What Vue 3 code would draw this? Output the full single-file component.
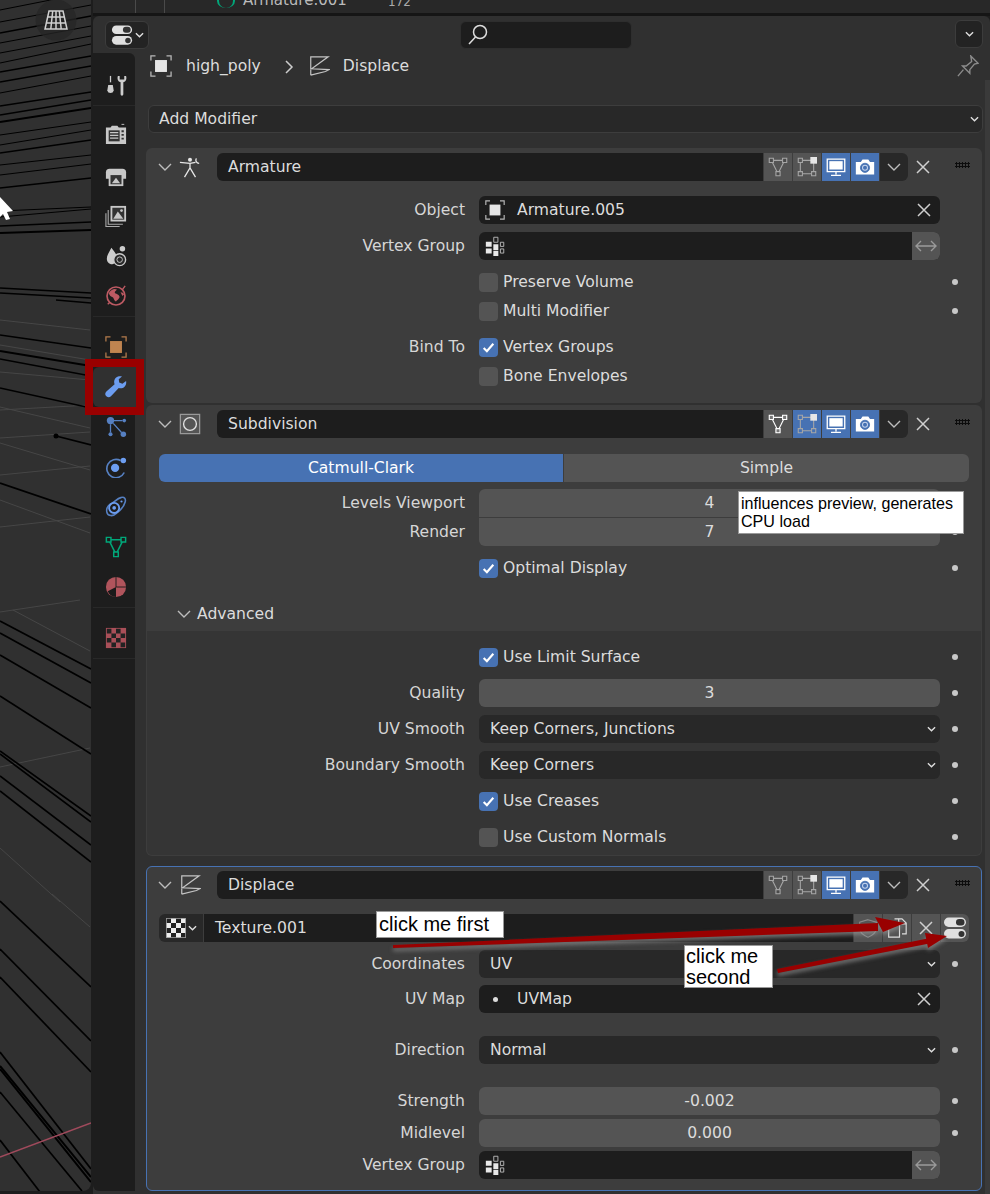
<script setup>
const blackLines = [
  [10,-8,1],[22,5,1],[33,16,1.4],[43,26,1],[53,36,1],[63,44,1.2],[72,56,1.6],[82,66,1.3],[93,76,1],[106,92,1.6],[115,100,1.6],[122,108,1.8],[135,122,1],[145,130,1],[153,140,1.3],[165,155,1],[175,164,1],[188,178,1.4],[211,207,1],[217,209,1],[226,222,1.4],[233,230,2],
  [288,293,1.4],[293,298,1.4],[335,348,1.6],[351,366,2],[359,376,1.6],[388,408,1.6],[483,514,1.8],
  [621,669,1.7],[633,683,1.7],[655,708,1.7],[696,754,1.7],[751,816,1.7],[754,822,1.7],[776,845,1.7],[791,862,1.7],
  [901,987,1.7],[949,1041,1.7],[977,1072,1.7],[1052,1169,1.7],[1066,1177,2],[1069,1182,2]
]
const grayLines = [
  [0,410,90,405],[0,438,90,432],[0,475,90,466],[0,527,90,517],[0,443,90,470],[0,407,90,428],[0,500,90,533],
  [0,612,80,600],[13,610,90,651],[0,767,90,748],[0,848,60,902],[52,894,90,927],[0,345,90,360],[0,320,90,330],[0,372,90,380]
]
const tabGroups = [
  [{ i: 'i-tool' }],
  [{ i: 'i-render' }, { i: 'i-output' }, { i: 'i-view' }, { i: 'i-scene' }, { i: 'i-world' }],
  [{ i: 'i-object' }, { i: 'i-wrench', active: true }, { i: 'i-particles' }, { i: 'i-physics' }, { i: 'i-constraint' }, { i: 'i-data' }, { i: 'i-material' }],
  [{ i: 'i-texture' }]
]
</script>

<template>
  <div class="app">
    <svg class="defs" width="0" height="0">
      <symbol id="i-tool" viewBox="0 0 24 24"><path d="M6 1v7" stroke="#ccc" stroke-width="1.400" fill="none"/><path d="M3.500 11h5l1 6a3.600 3.600 0 0 1-7 0z" fill="#ccc"/><path d="M14 1c-1 3 0 6 3 7v13a1.500 1.500 0 0 0 3 0V8c3-1 4-4 3-7l-2 0v4h-5V1z" fill="#ccc"/></symbol>
      <symbol id="i-render" viewBox="0 0 24 24"><path d="M1 5h5l1.500-2h6L15 5h8v18H1z" fill="#c8c8c8"/><path d="M4 8h12v12H4z" fill="#333"/><path d="M5.500 10.500h9M5.500 13.500h9M5.500 16.500h9" stroke="#c8c8c8" stroke-width="1.300"/><path d="M18 9h2.500M18 13h2.500M18 17h2.500" stroke="#333" stroke-width="2"/><path d="M18 1.500h3" stroke="#c8c8c8"/></symbol>
      <symbol id="i-output" viewBox="0 0 24 24"><path d="M1 8a4 4 0 0 1 4-4h14a4 4 0 0 1 4 4v7H1z" fill="#c8c8c8"/><path d="M4 9h16v14H4z" fill="#c8c8c8"/><path d="M6 11h12v10H6z" fill="#333"/><path d="M7.500 20l4.500-6 4.500 6z" fill="#c8c8c8"/></symbol>
      <symbol id="i-view" viewBox="0 0 24 24"><path d="M6 1h17v17H6z" fill="#c8c8c8"/><path d="M8 3h13v13H8z" fill="#333"/><path d="M9 15l5-8 6 8z" fill="#c8c8c8"/><circle cx="18" cy="6" r="1.500" fill="#c8c8c8"/><path d="M3.500 5.500v15.500h16M1 9v14.500h15" stroke="#aaa" stroke-width="1.200" fill="none"/></symbol>
      <symbol id="i-scene" viewBox="0 0 24 24"><path d="M7 3c3 4 6 7 6 11a6 6 0 0 1-5 7c-4 0-6-3-6-6 0-4 3-8 5-12z" fill="#ccc"/><circle cx="16" cy="16" r="6.500" fill="#282828" stroke="#ccc" stroke-width="1.500"/><circle cx="16" cy="16" r="3" fill="#282828" stroke="#ccc" stroke-width="1"/><circle cx="19" cy="4" r="3" fill="#ccc"/></symbol>
      <symbol id="i-world" viewBox="0 0 24 24"><circle cx="12" cy="12" r="9.800" fill="none" stroke="#bd5a63" stroke-width="1.800"/><path d="M4 9c3-5 7-5 9-4-1 2-3 2-2 4 2 1 4 1 5 4-1 3-3 3-4 5-3-2-2-4-4-5-2 0-3-2-4-4z" fill="#bd5a63"/><path d="M17 8c2 0 3 1 4 2l-2 2z" fill="#bd5a63"/><path d="M3 21l2-2M19 5l3-4" stroke="#bd5a63" stroke-width="1.500"/></symbol>
      <symbol id="i-object" viewBox="0 0 24 24"><path d="M1 6V1h5M18 1h5v5M23 18v5h-5M6 23H1v-5" fill="none" stroke="#b37b4c" stroke-width="1.400"/><rect x="5.500" y="5.500" width="13" height="13" fill="#c08450"/></symbol>
      <symbol id="i-wrench" viewBox="0 0 24 24"><path d="M23 5.500l-4 3-3.500-1.500-.5-3.500 3.500-3c-4-1-8 1-8.500 5.500-.1 1 .1 2 .5 3L1.500 17a3.500 3.500 0 0 0 5 5l8.500-9c4.500 1.500 9-2 8-7.500z" fill="#6c9df0"/></symbol>
      <symbol id="i-particles" viewBox="0 0 24 24"><circle cx="6" cy="5" r="4" fill="#5680c2"/><circle cx="21" cy="5" r="2" fill="#5680c2"/><circle cx="6" cy="20" r="2.200" fill="#5680c2"/><circle cx="20" cy="20" r="3" fill="#5680c2"/><path d="M9 5h10M6 9v9M9 8l9 10" stroke="#5680c2" stroke-width="1.400"/></symbol>
      <symbol id="i-physics" viewBox="0 0 24 24"><circle cx="11" cy="13" r="4.500" fill="#6c9df0"/><path d="M17 5a10 10 0 1 0 4 13" fill="none" stroke="#5680c2" stroke-width="1.800"/><circle cx="20" cy="5" r="3" fill="#6c9df0"/></symbol>
      <symbol id="i-constraint" viewBox="0 0 24 24"><path d="M18 1.500c3-1 5 2 4 5-1 4-5 9-9 12-4 4-10 4-11-1s2-8 6-10c3-2 6-5 10-6z" fill="none" stroke="#5680c2" stroke-width="1.700"/><circle cx="10" cy="13" r="5.500" fill="none" stroke="#6c9df0" stroke-width="2"/><circle cx="10" cy="13" r="2" fill="#6c9df0"/><circle cx="18" cy="6" r="1.200" fill="#6c9df0"/></symbol>
      <symbol id="i-data" viewBox="0 0 24 24"><path d="M4 4h16l-8 16z" fill="none" stroke="#00a87a" stroke-width="1.600"/><path d="M1.500 1.500h5v5h-5zM17.500 1.500h5v5h-5zM9.500 17.500h5v5h-5z" fill="#1d1d1d" stroke="#00a87a" stroke-width="1.600"/></symbol>
      <symbol id="i-material" viewBox="0 0 24 24"><circle cx="12" cy="12" r="11" fill="#b0545c"/><path d="M12 12L3 16.500a11 11 0 0 0 9 6.500z" fill="#1a1a1a"/><path d="M12 1v11h11" fill="none" stroke="#1a1a1a" stroke-width="1"/></symbol>
      <symbol id="i-texture" viewBox="0 0 24 24"><rect x="1" y="1" width="22" height="22" fill="#a94f58"/><path d="M2 2h5v5H2zM12 2h5v5h-5zM7 7h5v5H7zM17 7h5v5h-5zM2 12h5v5H2zM12 12h5v5h-5zM7 17h5v5H7zM17 17h5v5h-5z" fill="#222"/></symbol>
      <symbol id="i-switch" viewBox="0 0 24 24"><rect x="1" y="1.500" width="22" height="9.500" rx="4.700" fill="#e0e0e0"/><rect x="13" y="3" width="8.500" height="6.500" rx="3.200" fill="#333"/><rect x="1" y="13" width="22" height="9.500" rx="4.700" fill="#e0e0e0"/><rect x="15.500" y="15" width="6" height="6" rx="3" fill="#333"/></symbol>
      <symbol id="i-obj-white" viewBox="0 0 24 24"><path d="M1 6V1h5M18 1h5v5M23 18v5h-5M6 23H1v-5" fill="none" stroke="#b8b8b8" stroke-width="1.400"/><rect x="5.500" y="5.500" width="13" height="13" fill="#e6e6e6"/></symbol>
      <symbol id="i-displace" viewBox="0 0 24 24"><path d="M3 22V2h19L4 15l19 1-4 2-16 4" fill="none" stroke="#c4c4c4" stroke-width="1.300"/></symbol>
      <symbol id="i-armature" viewBox="0 0 24 24"><circle cx="12" cy="4" r="2.200" fill="#e6e6e6"/><path d="M1 7l11 1 6-1M12 8l0 5M12 13l-6 10M12 13l6 10" stroke="#e6e6e6" stroke-width="1.400" fill="none"/><path d="M19 2.500a3.500 3.500 0 0 0 3 5.500" stroke="#e6e6e6" stroke-width="1.400" fill="none"/></symbol>
      <symbol id="i-subsurf" viewBox="0 0 24 24"><path d="M1.500 1.500h21v21h-21z" fill="#555" stroke="#999" stroke-width="1.400"/><circle cx="12" cy="12" r="7" fill="none" stroke="#e0e0e0" stroke-width="1.500"/></symbol>
      <symbol id="i-tri" viewBox="0 0 24 24"><path d="M4 4h16l-8 16z" fill="none" stroke="#a6a6a6" stroke-width="1.300"/><path d="M1.500 1.500h5v5h-5zM17.500 1.500h5v5h-5zM9.500 17.500h5v5h-5z" fill="#4a4a4a" stroke="#a6a6a6" stroke-width="1.300"/></symbol>
      <symbol id="i-editbox" viewBox="0 0 24 24"><path d="M7 4h10M4 7v10M7 20h10M20 7v10" fill="none" stroke="#a6a6a6" stroke-width="1.300"/><path d="M1.500 1.500h5v5h-5zM1.500 17.500h5v5h-5zM17.500 17.500h5v5h-5z" fill="none" stroke="#a6a6a6" stroke-width="1.300"/><rect x="16" y="0" width="8" height="8" fill="#e6e6e6"/></symbol>
      <symbol id="i-monitor" viewBox="0 0 24 24"><path d="M1.500 2.500h21v15h-21z" fill="none" stroke="#fff" stroke-width="1.600"/><rect x="4" y="5" width="16" height="10" fill="#fff"/><path d="M12 18v3M6 22h12" stroke="#fff" stroke-width="1.600"/></symbol>
      <symbol id="i-camera" viewBox="0 0 24 24"><path d="M1 6h6l2-3h7l2 3h5v15H1z" fill="#fff"/><circle cx="12" cy="13" r="5.500" fill="#4772b3" stroke="#4772b3"/><circle cx="12" cy="13" r="3.600" fill="#c8d6ee"/><circle cx="12" cy="13" r="2.400" fill="#4772b3"/></symbol>
      <symbol id="i-vgroup" viewBox="0 0 24 24"><path d="M1 7h7v6H1zM1 15h7v6H1zM10 10h6v7h-6zM10 18h6v6h-6z" fill="#e8e8e8"/><path d="M10.500 1.500h5v6h-5zM18.500 7.500h4v5h-4zM18.500 15.500h4v5h-4z" fill="none" stroke="#bbb" stroke-width="1.100"/></symbol>
      <symbol id="i-shield" viewBox="0 0 24 24"><path d="M12 2l10 3v7c0 5-5 9-10 11C7 21 2 17 2 12V5z" fill="none" stroke="#8a8a8a" stroke-width="1.300"/></symbol>
      <symbol id="i-copy" viewBox="0 0 24 24"><path d="M9 1h9l5 5v13h-5" fill="none" stroke="#ddd" stroke-width="1.400"/><path d="M14 1v6h9" fill="none" stroke="#ddd" stroke-width="1.400"/><path d="M2 8h13v15H2z" fill="none" stroke="#ddd" stroke-width="1.400"/></symbol>
      <symbol id="i-checker" viewBox="0 0 24 24"><rect width="24" height="24" fill="#eee"/><path d="M0 0h6v6H0zM12 0h6v6h-6zM6 6h6v6H6zM18 6h6v6h-6zM0 12h6v6H0zM12 12h6v6h-6zM6 18h6v6H6zM18 18h6v6h-6z" fill="#222"/><rect x=".5" y=".5" width="23" height="23" fill="none" stroke="#999"/></symbol>
      <symbol id="i-pin" viewBox="0 0 24 24"><path d="M15 1l8 8-4 1-5 6 0 4-8-8 4 0 6-5zM7 16l-6 7" fill="none" stroke="#8c8c8c" stroke-width="1.500"/></symbol>
      <symbol id="i-grid" viewBox="0 0 24 20"><path d="M5 1h14l4 18H1zM12 1v18M3.700 7h16.600M2.400 13h19.200M8.700 1L6.800 19M15.300 1l1.900 18" fill="none" stroke="#d0d0d0" stroke-width="1.500"/></symbol>
      <symbol id="i-x" viewBox="0 0 14 14"><path d="M1 1l12 12M13 1L1 13" fill="none" stroke="#cfcfcf" stroke-width="1.500"/></symbol>
      <symbol id="i-swap" viewBox="0 0 22 12"><path d="M1 6h20M6 1L1 6l5 5M16 1l5 5-5 5" fill="none" stroke="#9a9a9a" stroke-width="1.400"/></symbol>
    </svg>

    <div class="viewport">
      <svg class="scene" width="91" height="1194">
        <line v-for="(g, n) in grayLines" :key="'g' + n" :x1="g[0]" :y1="g[1]" :x2="g[2]" :y2="g[3]" stroke="#464646" stroke-width="1"/>
        <line v-for="(b, n) in blackLines" :key="'b' + n" x1="0" :y1="b[0]" x2="91" :y2="b[1]" stroke="#000" :stroke-width="b[2]"/>
        <line x1="56" y1="436" x2="91" y2="445" stroke="#000" stroke-width="1.700"/>
        <circle cx="56" cy="436" r="2.500" fill="#000"/>
        <line x1="56" y1="300" x2="91" y2="303" stroke="#000" stroke-width="1.500"/>
        <line x1="0" y1="1092" x2="82" y2="1191" stroke="#000" stroke-width="1.700"/>
        <line x1="0" y1="1140" x2="40" y2="1192" stroke="#000" stroke-width="1.700"/>
        <line x1="0" y1="1157" x2="91" y2="1123" stroke="#a04a5c" stroke-width="1.600"/>
        <polygon points="0,197 13,211 7,212 10,219 6,220 3,214 0,217" fill="#fff"/>
        <circle cx="56" cy="20" r="20.500" fill="#262626" fill-opacity=".75"/>
        <use href="#i-grid" x="44" y="10" width="24" height="20"/>
      </svg>
    </div>

    <div class="right">
      <div class="strip">
        <i class="vline v1"></i><i class="vline v2"></i>
        <span class="strip-icon"></span>
        <span class="strip-name">Armature.001</span>
        <span class="strip-num">172</span>
      </div>
      <div class="editor">
        <div class="head">
          <button class="hbtn type-btn">
            <svg class="ic22"><use href="#i-switch"/></svg>
            <svg class="chev-s" viewBox="0 0 10 6"><path d="M1 1l4 4 4-4"/></svg>
          </button>
          <div class="search">
            <svg class="mag" viewBox="0 0 22 22"><circle cx="13" cy="8" r="6.500"/><path d="M8.500 13L2 20"/></svg>
          </div>
          <button class="hbtn menu-btn">
            <svg class="chev-s" viewBox="0 0 10 6"><path d="M1 1l4 4 4-4"/></svg>
          </button>
        </div>
        <div class="body">
          <nav class="tabs">
            <div v-for="(group, gi) in tabGroups" :key="gi" class="tab-group">
              <div v-for="t in group" :key="t.i" class="tab" :class="{ active: t.active }">
                <svg class="ic22"><use :href="'#' + t.i"/></svg>
              </div>
            </div>
          </nav>
          <main class="main">
            <i class="scroll"></i>
            <div class="crumbs">
              <svg class="ic22"><use href="#i-obj-white"/></svg>
              <span class="crumb-a">high_poly</span>
              <svg class="crumb-sep" viewBox="0 0 10 14"><path d="M2 1l6 6-6 6"/></svg>
              <svg class="ic22"><use href="#i-displace"/></svg>
              <span class="crumb-b">Displace</span>
              <svg class="ic22 pin"><use href="#i-pin"/></svg>
            </div>

            <div class="add-mod">
              <span>Add Modifier</span>
              <svg class="chev-s" viewBox="0 0 10 6"><path d="M1 1l4 4 4-4"/></svg>
            </div>

            <section class="panel p-arm">
              <div class="phead">
                <svg class="chev" viewBox="0 0 14 8"><path d="M1 1l6 6 6-6"/></svg>
                <svg class="ic22 picon"><use href="#i-armature"/></svg>
                <div class="pname">Armature</div>
                <div class="tog"><svg class="ic20"><use href="#i-tri"/></svg></div>
                <div class="tog"><svg class="ic20"><use href="#i-editbox"/></svg></div>
                <div class="tog on"><svg class="ic20"><use href="#i-monitor"/></svg></div>
                <div class="tog on"><svg class="ic20"><use href="#i-camera"/></svg></div>
                <div class="tog drop"><svg class="chev" viewBox="0 0 14 8"><path d="M1 1l6 6 6-6"/></svg></div>
                <svg class="xi hx"><use href="#i-x"/></svg>
                <i class="grip"></i>
              </div>
              <div class="row first">
                <label class="lbl">Object</label>
                <div class="val field"><svg class="ic20 fi"><use href="#i-obj-white"/></svg><span class="ft">Armature.005</span><svg class="xi fx"><use href="#i-x"/></svg></div>
              </div>
              <div class="row">
                <label class="lbl">Vertex Group</label>
                <div class="val field"><svg class="ic20 fi"><use href="#i-vgroup"/></svg><div class="swap"><svg class="swap-i"><use href="#i-swap"/></svg></div></div>
              </div>
              <div class="row"><label class="lbl"></label><div class="val chk"><i class="box"></i>Preserve Volume</div><i class="dot"></i></div>
              <div class="row tight"><label class="lbl"></label><div class="val chk"><i class="box"></i>Multi Modifier</div><i class="dot"></i></div>
              <div class="row"><label class="lbl">Bind To</label><div class="val chk"><i class="box on"><svg viewBox="0 0 14 14"><path d="M2.500 7.500l3 3 6-7"/></svg></i>Vertex Groups</div></div>
              <div class="row tight"><label class="lbl"></label><div class="val chk"><i class="box"></i>Bone Envelopes</div></div>
            </section>

            <section class="panel p-sub">
              <div class="phead">
                <svg class="chev" viewBox="0 0 14 8"><path d="M1 1l6 6 6-6"/></svg>
                <svg class="ic22 picon"><use href="#i-subsurf"/></svg>
                <div class="pname">Subdivision</div>
                <div class="tog"><svg class="ic20 bright"><use href="#i-tri"/></svg></div>
                <div class="tog on"><svg class="ic20"><use href="#i-editbox"/></svg></div>
                <div class="tog on"><svg class="ic20"><use href="#i-monitor"/></svg></div>
                <div class="tog on"><svg class="ic20"><use href="#i-camera"/></svg></div>
                <div class="tog drop"><svg class="chev" viewBox="0 0 14 8"><path d="M1 1l6 6 6-6"/></svg></div>
                <svg class="xi hx"><use href="#i-x"/></svg>
                <i class="grip"></i>
              </div>
              <div class="seg">
                <div class="seg-a">Catmull-Clark</div>
                <div class="seg-b">Simple</div>
              </div>
              <div class="row first-num">
                <label class="lbl">Levels Viewport</label>
                <div class="val num top">4</div>
              </div>
              <div class="row joined">
                <label class="lbl">Render</label>
                <div class="val num bot">7</div>
                <i class="dot"></i>
              </div>
              <div class="row"><label class="lbl"></label><div class="val chk"><i class="box on"><svg viewBox="0 0 14 14"><path d="M2.500 7.500l3 3 6-7"/></svg></i>Optimal Display</div><i class="dot"></i></div>
              <div class="adv-head">
                <svg class="chev" viewBox="0 0 14 8"><path d="M1 1l6 6 6-6"/></svg>
                <span>Advanced</span>
              </div>
              <div class="sub">
                <div class="row flush"><label class="lbl"></label><div class="val chk"><i class="box on"><svg viewBox="0 0 14 14"><path d="M2.500 7.500l3 3 6-7"/></svg></i>Use Limit Surface</div><i class="dot"></i></div>
                <div class="row"><label class="lbl">Quality</label><div class="val num">3</div><i class="dot"></i></div>
                <div class="row"><label class="lbl">UV Smooth</label><div class="val sel">Keep Corners, Junctions<svg class="chev-s" viewBox="0 0 10 6"><path d="M1 1l4 4 4-4"/></svg></div><i class="dot"></i></div>
                <div class="row"><label class="lbl">Boundary Smooth</label><div class="val sel">Keep Corners<svg class="chev-s" viewBox="0 0 10 6"><path d="M1 1l4 4 4-4"/></svg></div><i class="dot"></i></div>
                <div class="row"><label class="lbl"></label><div class="val chk"><i class="box on"><svg viewBox="0 0 14 14"><path d="M2.500 7.500l3 3 6-7"/></svg></i>Use Creases</div><i class="dot"></i></div>
                <div class="row"><label class="lbl"></label><div class="val chk"><i class="box"></i>Use Custom Normals</div><i class="dot"></i></div>
              </div>
            </section>

            <section class="panel p-dis">
              <div class="phead">
                <svg class="chev" viewBox="0 0 14 8"><path d="M1 1l6 6 6-6"/></svg>
                <svg class="ic22 picon"><use href="#i-displace"/></svg>
                <div class="pname">Displace</div>
                <div class="tog"><svg class="ic20"><use href="#i-tri"/></svg></div>
                <div class="tog"><svg class="ic20"><use href="#i-editbox"/></svg></div>
                <div class="tog on"><svg class="ic20"><use href="#i-monitor"/></svg></div>
                <div class="tog on"><svg class="ic20"><use href="#i-camera"/></svg></div>
                <div class="tog drop"><svg class="chev" viewBox="0 0 14 8"><path d="M1 1l6 6 6-6"/></svg></div>
                <svg class="xi hx"><use href="#i-x"/></svg>
                <i class="grip"></i>
              </div>
              <div class="tex">
                <div class="tex-pick"><svg class="ic20"><use href="#i-checker"/></svg><svg class="chev-s" viewBox="0 0 10 6"><path d="M1 1l4 4 4-4"/></svg></div>
                <div class="tex-name">Texture.001</div>
                <div class="tex-btn"><svg class="ic20"><use href="#i-shield"/></svg></div>
                <div class="tex-btn"><svg class="ic20"><use href="#i-copy"/></svg></div>
                <div class="tex-btn"><svg class="xi"><use href="#i-x"/></svg></div>
                <div class="tex-btn last"><svg class="ic24"><use href="#i-switch"/></svg></div>
              </div>
              <div class="row"><label class="lbl">Coordinates</label><div class="val sel">UV<svg class="chev-s" viewBox="0 0 10 6"><path d="M1 1l4 4 4-4"/></svg></div><i class="dot"></i></div>
              <div class="row uv"><label class="lbl">UV Map</label><div class="val field"><i class="bullet"></i><span class="ft">UVMap</span><svg class="xi fx"><use href="#i-x"/></svg></div></div>
              <div class="row gap-l"><label class="lbl">Direction</label><div class="val sel">Normal<svg class="chev-s" viewBox="0 0 10 6"><path d="M1 1l4 4 4-4"/></svg></div><i class="dot"></i></div>
              <div class="row gap-l2"><label class="lbl">Strength</label><div class="val num">-0.002</div><i class="dot"></i></div>
              <div class="row s4"><label class="lbl">Midlevel</label><div class="val num">0.000</div><i class="dot"></i></div>
              <div class="row s4"><label class="lbl">Vertex Group</label><div class="val field"><svg class="ic20 fi"><use href="#i-vgroup"/></svg><div class="swap"><svg class="swap-i"><use href="#i-swap"/></svg></div></div></div>
            </section>
          </main>
        </div>
      </div>
    </div>

    <div class="red-frame"></div>
    <div class="note n1">influences preview, generates CPU load</div>
    <div class="note n2">click me first</div>
    <div class="note n3">click me second</div>
    <svg class="arrows" width="990" height="1194">
      <g class="arrow">
        <polygon points="393,945 393,948 878,931 878,923"/>
        <polygon points="875,917 883,932 905,923"/>
      </g>
      <g class="arrow">
        <polygon points="777,969 778,973 932,943 930,938"/>
        <polygon points="925,933 928,948 947,936"/>
      </g>
    </svg>
  </div>
</template>

<style>
html, body { margin: 0; background: #1d1d1d; }
</style>

<style scoped>
.app { position: relative; display: flex; width: 990px; height: 1194px; overflow: hidden; background: #1d1d1d; font-family: "DejaVu Sans", sans-serif; font-size: 15.600px; color: #dcdcdc; }
.defs { position: absolute; }
.viewport { width: 91px; height: 1191px; flex: none; overflow: hidden; border-radius: 0 0 8px 0; background: #303030; }
.scene { display: block; }
.right { flex: 1; display: flex; flex-direction: column; min-width: 0; margin-left: 2px; }
.strip { position: relative; height: 13px; background: #282828; overflow: hidden; flex: none; border-bottom: 3px solid #151515; }
.vline { position: absolute; top: 0; bottom: 0; width: 1px; background: #4a4a4a; }
.v1 { left: 42px; } .v2 { left: 71px; }
.strip-icon { position: absolute; left: 124px; top: -6px; width: 14px; height: 14px; border-left: 2px solid #00a87a; border-right: 2px solid #00a87a; border-radius: 50%; }
.strip-name { position: absolute; left: 150px; top: -9px; color: #bbb; font-size: 15px; }
.strip-num { position: absolute; left: 295px; top: -5px; color: #aaa; font-size: 12px; }
.editor { flex: 1; display: flex; flex-direction: column; background: #303030; border-radius: 6px 6px 0 0; min-height: 0; }
.head { position: relative; height: 37px; flex: none; display: flex; align-items: center; padding-left: 12px; }
.hbtn { display: flex; align-items: center; justify-content: center; gap: 2px; height: 28px; background: #232323; border: 1px solid #3c3c3c; border-radius: 6px; padding: 0; box-sizing: border-box; }
.type-btn { width: 44px; }
.menu-btn { position: absolute; left: 862px; top: 4px; width: 28px; }
.search { margin-left: 311px; width: 172px; height: 28px; background: #1d1d1d; border: 1px solid #2e2e2e; border-radius: 6px; box-sizing: border-box; display: flex; align-items: center; padding-left: 6px; }
.mag { width: 22px; height: 22px; fill: none; stroke: #ddd; stroke-width: 1.500; }
.ic22 { width: 22px; height: 22px; flex: none; display: block; }
.ic20 { width: 20px; height: 20px; flex: none; display: block; }
.ic24 { width: 24px; height: 24px; flex: none; display: block; }
.xi { width: 14px; height: 14px; flex: none; display: block; }
.chev-s { width: 9px; height: 6px; fill: none; stroke: #e0e0e0; stroke-width: 1.500; flex: none; }
.chev { width: 14px; height: 8px; fill: none; stroke: #bdbdbd; stroke-width: 1.400; flex: none; }
.body { flex: 1; display: flex; min-height: 0; }
.tabs { width: 42px; flex: none; background: #1d1d1d; border-radius: 0 6px 0 0; margin-bottom: 3px; border-bottom-left-radius: 6px; }
.tab-group { padding: 10px 0 0 0; border-bottom: 1px solid #282828; }
.tab-group:first-child { padding-top: 12px; }
.tab { height: 40px; display: flex; align-items: center; justify-content: center; padding-left: 4px; box-sizing: border-box; }
.tab-group:nth-child(1) .tab svg { margin-top: 2px; }
.tab-group:nth-child(2) .tab:first-child svg { margin-top: -4px; }
.tab.active { background: #303030; border-radius: 6px 0 0 6px; }
.main { flex: 1; min-width: 0; padding: 0 8px 0 11px; position: relative; }
.scroll { position: absolute; right: 0; top: 27px; bottom: 0; width: 5px; background: #3a3a3a; }
.crumbs { position: relative; height: 52px; display: flex; align-items: flex-start; padding: 1px 0 0 4px; box-sizing: border-box; }
.crumbs > .ic22 { margin-top: 1px; }
.crumb-a { margin-left: 14px; line-height: 24px; }
.crumb-sep { width: 10px; height: 14px; fill: none; stroke: #ccc; stroke-width: 1.500; margin: 6px 0 0 23px; }
.crumb-b { margin-left: 13px; line-height: 24px; }
.crumbs > .crumb-sep + .ic22 { margin-left: 14px; }
.crumbs .pin { position: absolute; left: 811px; top: 1px; }
.add-mod { display: flex; align-items: center; justify-content: space-between; height: 28px; box-sizing: border-box; background: #282828; border: 1px solid #3d3d3d; border-radius: 6px; margin: 0 0 0 2px; padding: 0 3px 0 10px; width: 835px; }
.panel { background: #3d3d3d; border-radius: 6px; width: 836px; box-sizing: border-box; border: 1px solid transparent; }
.p-arm { margin-top: 15px; height: 255px; }
.p-sub { margin-top: 2px; height: 451px; overflow: hidden; }
.p-dis { margin-top: 10px; height: 325px; border-color: #4772b3; }
.phead { display: flex; align-items: center; height: 28px; margin-top: 4px; padding-left: 11px; }
.p-arm .phead, .p-sub .phead, .p-dis .phead { padding-top: 0; }
.panel::before { content: ""; display: block; height: 0.1px; }
.picon { margin-left: 7px; }
.pname { width: 546px; height: 28px; margin-left: 16px; box-sizing: border-box; background: #1d1d1d; border-radius: 6px 0 0 6px; padding-left: 11px; line-height: 28px; margin-right: 1px; }
.tog { width: 28px; height: 28px; margin-right: 1px; background: #545454; display: flex; align-items: center; justify-content: center; }
.tog.on { background: #4772b3; }
.tog.drop { background: #282828; border-radius: 0 6px 6px 0; }
.bright { filter: brightness(1.600); }
.hx { margin-left: 7px; }
.grip { width: 15px; height: 6px; margin-left: 25px; margin-top: -5px; background-image: radial-gradient(circle, #0c0c0c 0 1.200px, transparent 1.300px); background-size: 3px 3px; flex: none; }
.row { display: flex; align-items: center; height: 28px; margin-top: 8px; }
.row.first { margin-top: 15px; }
.row.tight { margin-top: 1px; }
.lbl { width: 318px; flex: none; text-align: right; color: #d6d6d6; }
.val { width: 461px; margin-left: 14px; height: 100%; box-sizing: border-box; display: flex; align-items: center; flex: none; }
.dot { width: 6px; height: 6px; border-radius: 50%; background: #c8c8c8; margin-left: 12px; flex: none; }
.field { position: relative; background: #1d1d1d; border-radius: 6px; }
.fi { margin-left: 6px; }
.ft { margin-left: 12px; }
.fx { position: absolute; left: 438px; top: 7px; }
.swap { position: absolute; right: 0; top: 0; width: 28px; height: 28px; background: #545454; border-radius: 0 6px 6px 0; display: flex; align-items: center; justify-content: center; }
.swap-i { width: 22px; height: 12px; }
.bullet { width: 5px; height: 5px; border-radius: 50%; background: #ddd; margin-left: 14px; margin-right: 7px; }
.chk { gap: 5px; }
.box { width: 19px; height: 19px; border-radius: 4px; background: #545454; flex: none; display: flex; align-items: center; justify-content: center; }
.box.on { background: #4772b3; }
.box svg { width: 15px; height: 15px; fill: none; stroke: #fff; stroke-width: 2; }
.num { background: #545454; border-radius: 6px; justify-content: center; }
.num.top { border-radius: 6px 6px 0 0; height: 28px; }
.num.bot { border-radius: 0 0 6px 6px; }
.sel { background: #282828; border-radius: 6px; padding: 0 4px 0 11px; justify-content: space-between; }
.seg { display: flex; width: 810px; height: 28px; margin: 16px 0 0 12px; border-radius: 6px; overflow: hidden; text-align: center; line-height: 28px; }
.seg-a { width: 404px; background: #4772b3; color: #fff; }
.seg-b { flex: 1; background: #545454; margin-left: 1px; }
.first-num { margin-top: 7px; }
.joined { margin-top: 1px; }
.adv-head { display: flex; align-items: center; gap: 6px; height: 28px; margin-top: 18px; padding-left: 30px; }
.sub { background: #353535; margin-top: 3px; height: 226px; padding-top: 12px; box-sizing: border-box; }
.row.flush { margin-top: 0; }
.tex { display: flex; height: 28px; margin: 15px 0 0 12px; width: 810px; }
.tex-pick { width: 44px; background: #282828; border-radius: 6px 0 0 6px; display: flex; align-items: center; justify-content: center; gap: 2px; }
.tex-name { width: 649px; margin: 0 1px 0 1px; background: #1d1d1d; padding-left: 11px; line-height: 28px; box-sizing: border-box; }
.tex-btn { width: 28px; margin-right: 1px; background: #545454; display: flex; align-items: center; justify-content: center; }
.tex-btn.last { margin-right: 0; border-radius: 0 6px 6px 0; }
.uv { margin-top: 7px; }
.gap-l { margin-top: 23px; }
.gap-l2 { margin-top: 23px; }
.s4 { margin-top: 4px; }
.red-frame { position: absolute; left: 85px; top: 359px; width: 59px; height: 56px; box-sizing: border-box; border: 8px solid #990000; }
.note { position: absolute; background: #fff; color: #000; border: 1px solid #999; box-sizing: border-box; font-family: "Liberation Sans", Arial, sans-serif; }
.n1 { left: 738px; top: 491px; width: 226px; height: 43px; padding: 2px; font-size: 16.100px; line-height: 18px; }
.n2 { left: 376px; top: 911px; width: 128px; height: 27px; padding: 0 2px; font-size: 20px; line-height: 25px; }
.n3 { left: 684px; top: 945px; width: 89px; height: 43px; padding: 0 1px; font-size: 20px; line-height: 21px; }
.arrows { position: absolute; left: 0; top: 0; pointer-events: none; }
.arrow { fill: #990000; filter: drop-shadow(0 3px 2px rgba(150,150,150,.7)); }
</style>
